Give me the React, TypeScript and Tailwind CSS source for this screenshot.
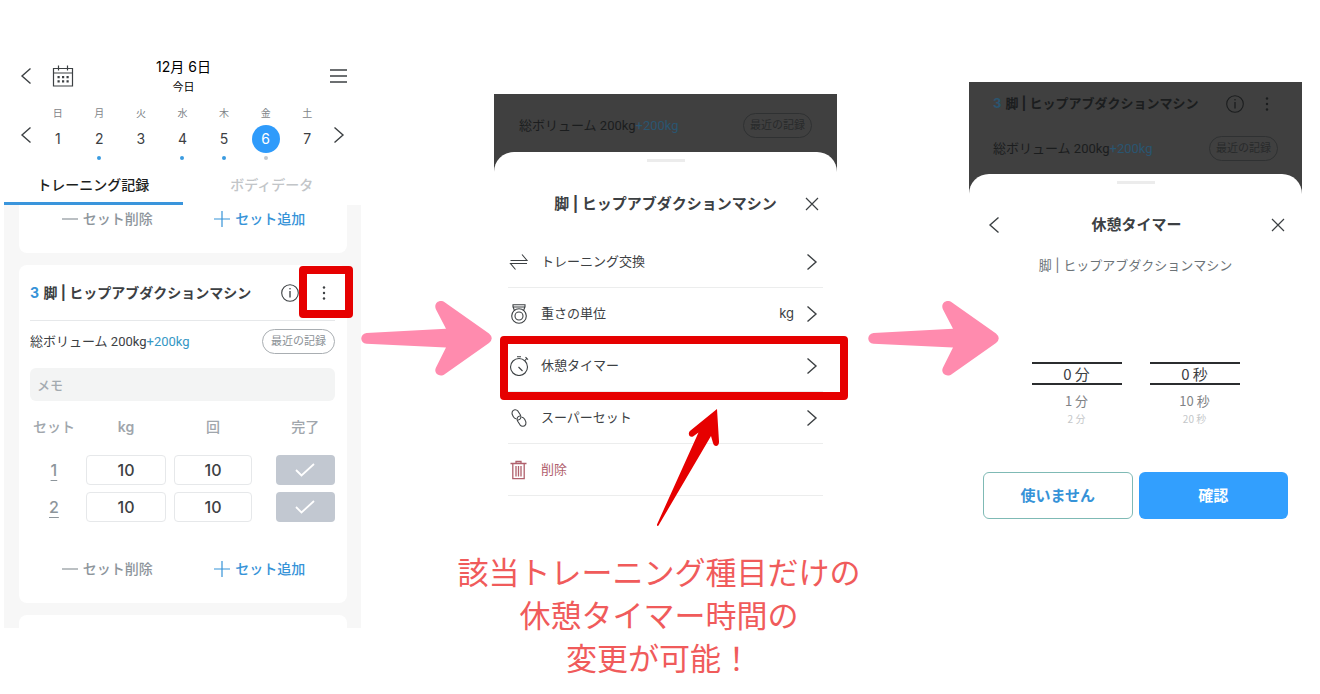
import React, { useState } from "react";

const fontClass =
  "font-['Inter','Noto_Sans_CJK_JP',sans-serif] text-[#3c4043]";

const days = [
  { label: "日", date: 1 },
  { label: "月", date: 2, dot: "bg-[#3a9be0]" },
  { label: "火", date: 3 },
  { label: "水", date: 4, dot: "bg-[#3a9be0]" },
  { label: "木", date: 5, dot: "bg-[#3a9be0]" },
  { label: "金", date: 6, dot: "bg-[#c4c8cc]", selected: true },
  { label: "土", date: 7 },
];

const EXERCISE = "脚 | ヒップアブダクションマシン";

interface IconProps {
  className?: string;
}

const ChevronLeftIcon = ({ className = "" }: IconProps) => (
  <svg viewBox="0 0 12 18" width="12" height="18" fill="none" stroke="currentColor" strokeWidth="1.4" className={className}>
    <path d="M10.500 1.500 2 9l8.500 7.500" />
  </svg>
);

const ChevronRightIcon = ({ className = "" }: IconProps) => (
  <svg viewBox="0 0 12 18" width="12" height="18" fill="none" stroke="currentColor" strokeWidth="1.4" className={className}>
    <path d="M1.500 1.500 10 9l-8.500 7.500" />
  </svg>
);

const CloseIcon = () => (
  <svg viewBox="0 0 14 14" width="14" height="14" fill="none" stroke="currentColor" strokeWidth="1.2">
    <path d="M1 1l12 12M13 1 1 13" />
  </svg>
);

const CalendarIcon = () => (
  <svg viewBox="0 0 22 22" width="22" height="22" fill="none" stroke="currentColor" strokeWidth="1.2">
    <path d="M1.500 3.500h19v17.500h-19zM1.500 8h19M6.500 .5v5M15.500 .5v5" />
    <path d="M5.500 12.200h2.200M10 12.200h2.200M14.500 12.200h2.200M5.500 16.400h2.200M10 16.400h2.200M14.500 16.400h2.200" strokeWidth="2.200" />
  </svg>
);

const MenuIcon = () => (
  <svg viewBox="0 0 18 16" width="18" height="16" fill="none" stroke="currentColor" strokeWidth="1.3">
    <path d="M1 2h17M1 8h17M1 14h17" />
  </svg>
);

const InfoIcon = () => (
  <svg viewBox="0 0 18 18" width="18" height="18" fill="none" stroke="currentColor" strokeWidth="1.1" className="shrink-0">
    <circle cx="9" cy="9" r="8.300" />
    <path d="M9 7v6.500" strokeWidth="1.300" />
    <circle cx="9" cy="4.800" r=".8" fill="currentColor" stroke="none" />
  </svg>
);

const DotsIcon = () => (
  <svg viewBox="0 0 4 16" width="4" height="16" fill="currentColor">
    <circle cx="2" cy="2.500" r="1.200" />
    <circle cx="2" cy="8" r="1.200" />
    <circle cx="2" cy="13.500" r="1.200" />
  </svg>
);

const SwapIcon = () => (
  <svg viewBox="0 0 20 20" width="20" height="20" fill="none" stroke="currentColor" strokeWidth="1.1">
    <path d="M1.500 8.500H18L13 2.500M18 11.500H1.500L6.500 17.500" />
  </svg>
);

const WeightIcon = () => (
  <svg viewBox="0 0 20 20" width="20" height="20" fill="none" stroke="currentColor" strokeWidth="1.1">
    <path d="M5.500 6.500 4 3V.8h12V3l-1.500 3.500M4 3h12" />
    <circle cx="10" cy="12" r="7.300" />
    <circle cx="10" cy="12" r="4" />
  </svg>
);

const TimerIcon = () => (
  <svg viewBox="0 0 20 20" width="20" height="20" fill="none" stroke="currentColor" strokeWidth="1.1">
    <circle cx="10" cy="11" r="8.500" />
    <path d="M8 .8h4M16.500 1.200l2.500 2.500M17.700 2.500 16 4.500M9.500 11l4 4" />
  </svg>
);

const LinkIcon = () => (
  <svg viewBox="0 0 20 20" width="20" height="20" fill="none" stroke="currentColor" strokeWidth="1.100" strokeLinecap="round">
    <path d="M7 10.800C5.800 10.600 5 9.800 4.200 8.500 3.200 6.900 2.500 5.300 3.200 3.800 4.300 1.300 7.300 1 9 3.200l2.300 3.500c1.500 2.400.2 5-2 5.300" />
    <path d="M13 9.200c1.200.2 2 1 2.800 2.300 1 1.600 1.700 3.200 1 4.700-1.100 2.500-4.100 2.800-5.800.6l-2.300-3.500c-1.500-2.400-.2-5 2-5.300" />
  </svg>
);

const TrashIcon = () => (
  <svg viewBox="0 0 20 20" width="20" height="20" fill="none" stroke="currentColor" strokeWidth="1.300">
    <path d="M1.500 3.500h16M7 3.500V1.500h5v2M3.800 3.500v15.200h11.400V3.500M7 6v10.500M9.500 6v10.500M12 6v10.500" />
  </svg>
);

const CheckIcon = () => (
  <svg viewBox="0 0 20 14" width="20" height="14" fill="none" stroke="currentColor" strokeWidth="1.800" className="mx-auto">
    <path d="m1 7 5.500 5.500L19 1" />
  </svg>
);

const PinkArrow = () => (
  <svg viewBox="0 0 131 76" width="131" height="76" className="shrink-0" aria-hidden="true">
    <path
      fill="#ff8bae"
      d="M5.500 33 85 28.700 75 9.500C72 3 79 -1.500 84 2.500L128 33.500Q133.500 38.300 128 43L84 74C79 78 72 73.500 75 67.500L85 47.500 5.500 43.800C-1.500 43 -1.500 34 5.500 33Z"
    />
  </svg>
);

const RedArrow = ({ className = "" }: IconProps) => (
  <svg viewBox="0 0 66 120" width="66" height="120" className={className} aria-hidden="true">
    <path
      fill="#e60000"
      d="M62 2 64 34.500C64.300 40 59 40.500 58 36L56 29 3.500 118.500Q2 120 2 117.500L43.500 25.500 38 29.500C34.500 31 32 26.500 35.500 23.500Z"
    />
  </svg>
);

interface VolumeRowProps {
  dark?: boolean;
}

const VolumeRow = ({ dark = false }: VolumeRowProps) => (
  <div className="flex h-[41px] items-center justify-between">
    <p className={`whitespace-nowrap font-['Roboto','Noto_Sans_CJK_JP',sans-serif] text-[13px] ${dark ? "text-[#1b1d1e]" : ""}`}>
      総ボリューム 200kg
      <span className={dark ? "text-[#2a5570]" : "text-[#3597c4]"}>+200kg</span>
    </p>
    <button
      type="button"
      className={`h-[25px] rounded-full border text-[11px] ${
        dark
          ? "w-[69px] border-[#2f3132] text-[#282a2b]"
          : "w-[73px] border-[#a9aeb2] text-[#8b9196]"
      }`}
    >
      最近の記録
    </button>
  </div>
);

const SetActions = () => (
  <div className="grid h-7 grid-cols-2 text-sm font-medium">
    <button type="button" className="flex items-center justify-center gap-[5px] pl-0.5 text-[#8d959b]">
      <svg viewBox="0 0 16 16" width="16" height="16" stroke="currentColor" strokeWidth="1.2">
        <path d="M0 8h16" />
      </svg>
      セット削除
    </button>
    <button type="button" className="flex items-center justify-center gap-[5px] pl-0.5 text-[#3693d8]">
      <svg viewBox="0 0 16 16" width="16" height="16" stroke="currentColor" strokeWidth="1.2">
        <path d="M0 8h16M8 0v16" />
      </svg>
      セット追加
    </button>
  </div>
);

const WorkoutLog: React.FC = () => {
  const [sets, setSets] = useState([
    { kg: "10", reps: "10" },
    { kg: "10", reps: "10" },
  ]);

  const handleChange = (index: number, field: "kg" | "reps", value: string) => {
    setSets(sets.map((s, i) => (i === index ? { ...s, [field]: value } : s)));
  };

  const inputClass =
    "mx-auto block h-[30px] w-[91%] rounded-sm border border-[#e6e8ea] bg-white text-center text-base font-medium text-[#3c4043] focus:outline-none";

  return (
    <section className="pt-[55px]">
      <header className="grid h-10 grid-cols-3 items-center pr-3.5 pl-4">
        <div className="flex items-center gap-5">
          <button type="button" aria-label="戻る">
            <ChevronLeftIcon />
          </button>
          <button type="button" aria-label="カレンダー">
            <CalendarIcon />
          </button>
        </div>
        <div className="pt-0.5 text-center text-black">
          <h1 className="text-sm leading-5">12月 6日</h1>
          <p className="text-[11px] leading-5">今日</p>
        </div>
        <button type="button" aria-label="メニュー" className="justify-self-end">
          <MenuIcon />
        </button>
      </header>

      <div className="mt-2.5 flex items-center px-4">
        <button type="button" aria-label="前の週" className="mt-1">
          <ChevronLeftIcon />
        </button>
        <div className="mx-[5px] grid flex-1 grid-cols-7">
          {days.map((day) => (
            <button key={day.date} type="button" className="flex flex-col items-center">
              <span className="text-[10px] leading-4 text-[#7e8488]">{day.label}</span>
              <span
                className={`mt-1 flex size-7 items-center justify-center rounded-full text-sm ${
                  day.selected ? "bg-[#2f9bfb] text-white" : ""
                }`}
              >
                {day.date}
              </span>
              <span className={`mt-[3px] size-1 rounded-full ${day.dot ?? ""}`} />
            </button>
          ))}
        </div>
        <button type="button" aria-label="次の週" className="mt-1">
          <ChevronRightIcon />
        </button>
      </div>

      <div className="mt-[5px] grid h-10 grid-cols-2 text-sm" role="tablist">
        <button type="button" role="tab" aria-selected="true" className="border-b-[3px] border-[#3a95dc] pt-0.5 font-medium text-[#1c1e20]">
          トレーニング記録
        </button>
        <button type="button" role="tab" aria-selected="false" className="border-b-[3px] border-transparent pt-0.5 font-medium text-[#c2c5c8]">
          ボディデータ
        </button>
      </div>

      <div className="bg-[#f7f7f7] pr-3.5 pl-[15px]">
        <div className="rounded-b-lg bg-white pr-3 pb-5 pl-[11px]">
          <SetActions />
        </div>

        <article className="mt-3 rounded-lg bg-white pr-3 pb-5 pl-[11px]">
          <div className="flex h-14 items-center border-b border-[#e6e8ea]">
            <h2 className="flex-1 whitespace-nowrap text-sm font-bold">
              <span className="mr-px text-[#3693d8]">3</span> {EXERCISE}
            </h2>
            <button type="button" aria-label="詳細">
              <InfoIcon />
            </button>
            <button type="button" aria-label="その他" className="relative ml-3.5 flex w-[22px] justify-center">
              <DotsIcon />
              <span className="absolute -top-[19px] -left-3.5 h-[52px] w-[54px] rounded-sm border-8 border-[#e60000]" />
            </button>
          </div>

          <VolumeRow />

          <input
            type="text"
            aria-label="メモ"
            placeholder="メモ"
            className="mt-1.5 block h-[33px] w-full rounded-md bg-[#f3f4f4] px-[7px] text-[13px] font-medium placeholder:text-[#a3aab0] focus:outline-none"
          />

          <table className="mt-1 w-full table-fixed">
            <thead>
              <tr className="text-sm text-[#a0a6ac]">
                <th className="h-[46px] w-[17%] pr-1 pb-0.5 font-medium whitespace-nowrap">セット</th>
                <th className="w-[29%] pb-0.5 font-semibold">kg</th>
                <th className="w-[28%] pb-0.5 font-medium">回</th>
                <th className="w-[26%] pb-0.5 pl-5 font-medium">完了</th>
              </tr>
            </thead>
            <tbody>
              {sets.map((set, index) => (
                <tr key={index}>
                  <td className="h-[37px] pr-1 text-center font-medium text-[#8d959b] underline underline-offset-4">
                    {index + 1}
                  </td>
                  <td>
                    <input
                      type="text"
                      aria-label={`セット${index + 1} kg`}
                      value={set.kg}
                      onChange={(e) => handleChange(index, "kg", e.target.value)}
                      className={inputClass}
                    />
                  </td>
                  <td>
                    <input
                      type="text"
                      aria-label={`セット${index + 1} 回`}
                      value={set.reps}
                      onChange={(e) => handleChange(index, "reps", e.target.value)}
                      className={inputClass}
                    />
                  </td>
                  <td className="pl-5">
                    <button type="button" aria-label="完了" className="block h-[30px] w-full rounded-sm bg-[#c2c8d1] text-white">
                      <CheckIcon />
                    </button>
                  </td>
                </tr>
              ))}
            </tbody>
          </table>

          <div className="mt-[30px]">
            <SetActions />
          </div>
        </article>

        <div className="mt-3 h-[13px] rounded-t-lg bg-white" />
      </div>
    </section>
  );
};

const menuItems = [
  { label: "トレーニング交換", icon: <SwapIcon /> },
  { label: "重さの単位", icon: <WeightIcon />, value: "kg" },
  { label: "休憩タイマー", icon: <TimerIcon />, highlighted: true },
  { label: "スーパーセット", icon: <LinkIcon /> },
  { label: "削除", icon: <TrashIcon />, danger: true },
];

const ExerciseMenu: React.FC = () => (
  <section className="pt-[94px]">
    <div className="bg-[#404040]">
      <div className="h-[58px] px-[25px] pt-[11px]">
        <VolumeRow dark />
      </div>
      <div className="rounded-t-[20px] bg-white pt-[7px]">
        <div className="mx-auto h-[3px] w-[38px] bg-[#ececec]" />
        <div className="mt-[22px] grid h-10 grid-cols-[1fr_auto_1fr] items-center px-[18px]">
          <span />
          <h2 className="whitespace-nowrap text-[15px] font-bold">{EXERCISE}</h2>
          <button type="button" aria-label="閉じる" className="justify-self-end">
            <CloseIcon />
          </button>
        </div>
        <ul className="mx-3.5 mt-3">
          {menuItems.map((item) => (
            <li key={item.label} className="relative border-b border-[#eceded]">
              <button
                type="button"
                className={`flex h-[51px] w-full items-center pr-[5px] pl-px text-[13px] ${
                  item.danger ? "text-[#b0606c]" : ""
                }`}
              >
                {item.icon}
                <span className="ml-3 flex-1 text-left">{item.label}</span>
                {item.value && <span className="mr-3">{item.value}</span>}
                {!item.danger && <ChevronRightIcon />}
              </button>
              {item.highlighted && (
                <>
                  <span className="pointer-events-none absolute -top-1 -right-[25px] -bottom-[9px] -left-2 rounded-sm border-8 border-[#e60000]" />
                  <RedArrow className="absolute top-[67px] left-[147px] z-10" />
                </>
              )}
            </li>
          ))}
        </ul>
      </div>
    </div>
    <p className="mt-[55px] -mr-[31px] -ml-[44px] text-center text-[31px] leading-[43px] whitespace-nowrap text-[#f05b5b]">
      該当トレーニング種目だけの
      <br />
      休憩タイマー時間の
      <br />
      変更が可能！
    </p>
  </section>
);

interface WheelProps {
  label: string;
  options: string[];
}

const Wheel = ({ label, options }: WheelProps) => (
  <div role="listbox" aria-label={label} className="w-[90px] text-center font-['Noto_Sans_CJK_JP',sans-serif]">
    <div role="option" aria-selected="true" className="border-y-2 border-[#2b2d2f] text-[15px] leading-[19px]">
      {options[0]}
    </div>
    <div role="option" aria-selected="false" className="mt-1.5 text-[13px] leading-5 text-[#7f8386]">
      {options[1]}
    </div>
    <div role="option" aria-selected="false" className="text-[10px] leading-4 text-[#c4c7c9]">
      {options[2]}
    </div>
  </div>
);

const RestTimer: React.FC = () => (
  <section className="pt-[82px]">
    <div className="bg-[#404040]">
      <div className="h-[92px] px-6">
        <div className="flex h-[43px] items-center text-[#1b1d1e]">
          <h2 className="flex-1 whitespace-nowrap text-[13px] font-bold">
            <span className="mr-px text-[#2a5570]">3</span> {EXERCISE}
          </h2>
          <button type="button" aria-label="詳細">
            <InfoIcon />
          </button>
          <button type="button" aria-label="その他" className="ml-3 flex w-[22px] justify-center">
            <DotsIcon />
          </button>
        </div>
        <div className="mt-[3px]">
          <VolumeRow dark />
        </div>
      </div>
      <div className="rounded-t-[20px] bg-white pt-[7px]">
        <div className="mx-auto h-[3px] w-[38px] bg-[#ececec]" />
        <div className="mt-[21px] grid h-10 grid-cols-[1fr_auto_1fr] items-center pr-[17px] pl-[19px]">
          <button type="button" aria-label="戻る" className="justify-self-start">
            <ChevronLeftIcon />
          </button>
          <h2 className="text-[15px] font-bold">休憩タイマー</h2>
          <button type="button" aria-label="閉じる" className="justify-self-end">
            <CloseIcon />
          </button>
        </div>
        <p className="mt-2.5 text-center text-[13px] leading-5 text-[#6c7377]">{EXERCISE}</p>
        <div className="mt-[87px] flex justify-center gap-7">
          <Wheel label="分" options={["0 分", "1 分", "2 分"]} />
          <Wheel label="秒" options={["0 秒", "10 秒", "20 秒"]} />
        </div>
        <div className="mt-[45px] grid grid-cols-2 gap-1.5 px-3.5 text-[15px] font-bold">
          <button type="button" className="h-[47px] rounded-md border border-[#7fbab5] pt-0.5 text-[#3693d8]">
            使いません
          </button>
          <button type="button" className="h-[47px] rounded-md bg-[#329ffe] pt-0.5 text-white">
            確認
          </button>
        </div>
      </div>
    </div>
  </section>
);

export default function App() {
  return (
    <main
      className={`grid grid-cols-[minmax(0,357fr)_minmax(0,133fr)_minmax(0,343fr)_minmax(0,132fr)_minmax(0,333fr)] overflow-hidden bg-white pr-[18px] pb-3 pl-1 ${fontClass}`}
    >
      <WorkoutLog />
      <div className="flex pt-[300px]">
        <PinkArrow />
      </div>
      <ExerciseMenu />
      <div className="z-10 flex pt-[300px] pl-[31px]">
        <PinkArrow />
      </div>
      <RestTimer />
    </main>
  );
}
